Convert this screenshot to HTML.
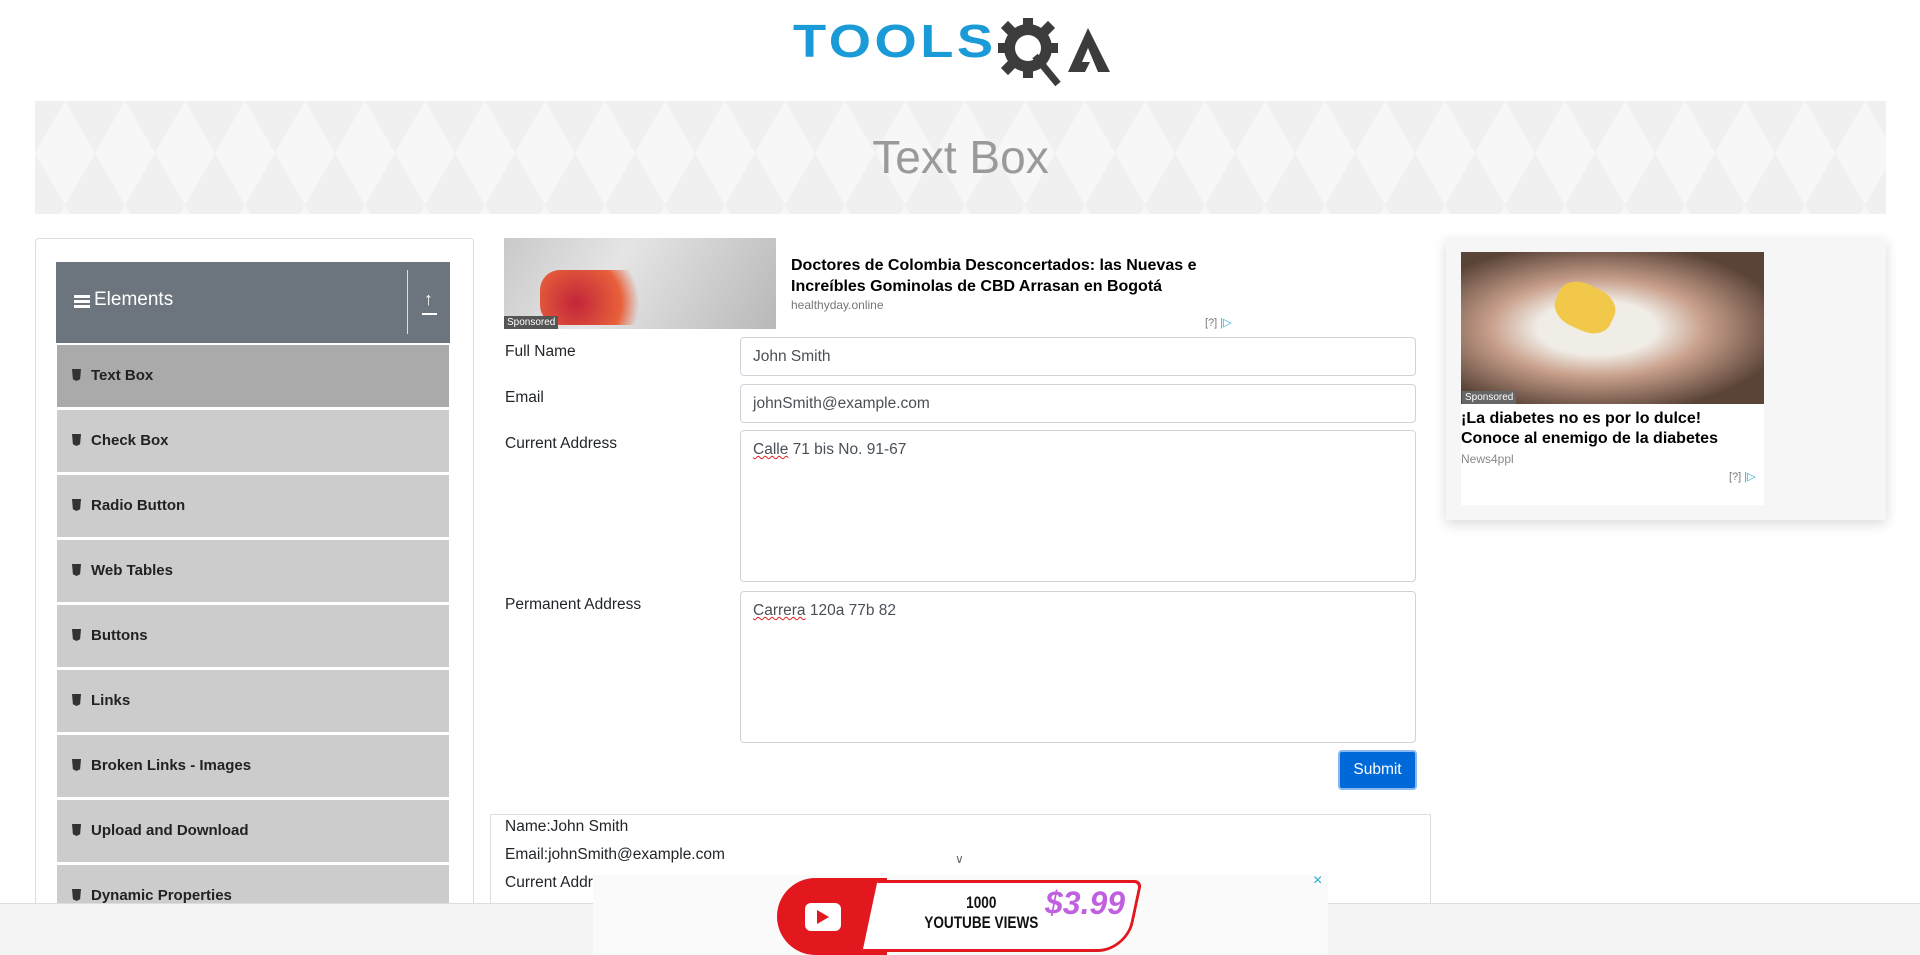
<!DOCTYPE html>
<html><head><meta charset="utf-8">
<style>
*{box-sizing:border-box;margin:0;padding:0}
html,body{width:1920px;height:955px;overflow:hidden}
body{background:#fff;font-family:"Liberation Sans",sans-serif;color:#212529;position:relative}
#wrap{position:absolute;left:0;top:0;width:1920px;height:955px;overflow:hidden}
.abs{position:absolute}
.banner{left:35px;top:101px;width:1851px;height:113px;background:#f7f7f7;background-image:linear-gradient(60deg,#f0f0f0 25%,transparent 25%,transparent 75%,#f0f0f0 75%),linear-gradient(-60deg,#f0f0f0 25%,transparent 25%,transparent 75%,#f0f0f0 75%);background-size:60px 104px}
.banner h1{font-weight:300;font-size:46px;color:#9a9a9a;text-align:center;line-height:113px}
.card{left:35px;top:238px;width:439px;height:717px;border:1px solid #ddd;border-bottom:none;border-radius:4px 4px 0 0}
.hdr{left:56px;top:262px;width:394px;height:81px;background:#6c757d;color:#fff}
.item{left:57px;width:392px;height:62px;background:#ccc;font-weight:bold;font-size:15px;color:#222;padding-left:34px;line-height:62px}
.item:before{content:"";position:absolute;left:15px;top:24px;width:9px;height:12px;background:#333;clip-path:polygon(0 0,100% 0,90% 85%,50% 100%,10% 85%)}
.lbl{left:505px;font-size:15.5px;color:#212529}
.inp{left:740px;width:676px;border:1px solid #ced4da;border-radius:4px;font-size:15.5px;color:#495057;padding:10px 12px;background:#fff}
.sq{text-decoration:underline wavy #d22;text-decoration-thickness:1px}
</style></head><body><div id="wrap">
<div class="abs" style="left:793px;top:18px;font-weight:bold;font-size:46px;color:#1a9ad6;letter-spacing:3px;line-height:46px;transform:scaleX(1.18);transform-origin:left">TOOLS</div>
<svg class="abs" style="left:990px;top:14px" width="130" height="80" viewBox="0 0 130 80">
<g fill="#3c3c3c">
<circle cx="38" cy="34" r="24"/>
<rect x="33" y="4" width="10" height="10"/><rect x="33" y="54" width="10" height="10"/>
<rect x="8" y="29" width="10" height="10"/><rect x="58" y="29" width="10" height="10"/>
<rect x="13" y="9" width="10" height="10" transform="rotate(45 18 14)"/><rect x="53" y="9" width="10" height="10" transform="rotate(45 58 14)"/>
<rect x="13" y="49" width="10" height="10" transform="rotate(45 18 54)"/>
</g>
<circle cx="38" cy="34" r="13" fill="#fff"/>
<line x1="45" y1="42" x2="68" y2="70" stroke="#3c3c3c" stroke-width="7"/>
<polygon points="78,58 98,14 120,58 108,58 98,34 92,48 100,48 95,58" fill="#3c3c3c"/>
</svg>
<div class="abs banner"><h1>Text Box</h1></div>
<div class="abs card"></div>
<div class="abs hdr">
<div class="abs" style="left:18px;top:33px;width:16px;height:3px;background:#fff;box-shadow:0 5px 0 #fff,0 10px 0 #fff"></div>
<div class="abs" style="left:38px;top:27px;font-size:19px">Elements</div>
<div class="abs" style="left:351px;top:8px;width:1px;height:64px;background:#ddd"></div>
<div class="abs" style="left:368px;top:27px;font-size:18px">↑</div>
<div class="abs" style="left:366px;top:51px;width:15px;height:2px;background:#fff"></div>
</div>
<div class="abs item" style="top:345px;background:#aaa">Text Box</div>
<div class="abs item" style="top:410px">Check Box</div>
<div class="abs item" style="top:475px">Radio Button</div>
<div class="abs item" style="top:540px">Web Tables</div>
<div class="abs item" style="top:605px">Buttons</div>
<div class="abs item" style="top:670px">Links</div>
<div class="abs item" style="top:735px">Broken Links - Images</div>
<div class="abs item" style="top:800px">Upload and Download</div>
<div class="abs item" style="top:865px;height:38px;overflow:hidden">Dynamic Properties</div>
<div class="abs" style="left:504px;top:238px;width:272px;height:91px;background:linear-gradient(120deg,#c9c9c9,#e5e5e5 40%,#b8b8b8)"></div>
<div class="abs" style="left:540px;top:270px;width:120px;height:55px;border-radius:20px;background:radial-gradient(circle at 30% 60%,#c2263a,#e8603a 50%,transparent 70%)"></div>
<div class="abs" style="left:504px;top:316px;background:#555;color:#fff;font-size:10px;padding:1px 3px">Sponsored</div>
<div class="abs" style="left:791px;top:255px;font-weight:bold;font-size:16px;line-height:21px;color:#000">Doctores de Colombia Desconcertados: las Nuevas e<br>Increíbles Gominolas de CBD Arrasan en Bogotá</div>
<div class="abs" style="left:791px;top:298px;font-size:12px;color:#777">healthyday.online</div>
<div class="abs" style="left:1205px;top:316px;font-size:11px;color:#777">[?] <span style="color:#29a9d6">|▷</span></div>
<div class="abs lbl" style="top:343px">Full Name</div>
<div class="abs inp" style="top:337px;height:39px">John Smith</div>
<div class="abs lbl" style="top:389px">Email</div>
<div class="abs inp" style="top:384px;height:39px">johnSmith@example.com</div>
<div class="abs lbl" style="top:435px">Current Address</div>
<div class="abs inp" style="top:430px;height:152px"><span class="sq">Calle</span> 71 bis No. 91-67</div>
<div class="abs lbl" style="top:596px">Permanent Address</div>
<div class="abs inp" style="top:591px;height:152px"><span class="sq">Carrera</span> 120a 77b 82</div>
<div class="abs" style="left:1338px;top:750px;width:79px;height:40px;background:#0069d9;border:2px solid #8ab8f0;border-radius:4px;color:#fff;font-size:15.5px;text-align:center;line-height:36px">Submit</div>
<div class="abs" style="left:490px;top:814px;width:941px;height:141px;border:1px solid #ddd;border-bottom:none"></div>
<div class="abs lbl" style="top:818px">Name:John Smith</div>
<div class="abs lbl" style="top:846px">Email:johnSmith@example.com</div>
<div class="abs lbl" style="top:874px">Current Address :</div>
<div class="abs" style="left:1446px;top:238px;width:440px;height:282px;background:#f6f6f6;box-shadow:0 4px 12px rgba(0,0,0,.15)"></div>
<div class="abs" style="left:1461px;top:252px;width:303px;height:253px;background:#fff"></div>
<div class="abs" style="left:1461px;top:252px;width:303px;height:152px;background:radial-gradient(ellipse at 45% 50%,#f0ede6 25%,#c9a08c 45%,#5a4438 80%)"></div>
<div class="abs" style="left:1555px;top:285px;width:60px;height:45px;background:#f2c84b;border-radius:40%;transform:rotate(25deg)"></div>
<div class="abs" style="left:1462px;top:391px;background:#666;color:#fff;font-size:10px;padding:1px 3px">Sponsored</div>
<div class="abs" style="left:1461px;top:409px;font-weight:bold;font-size:16px;line-height:20px;color:#000">¡La diabetes no es por lo dulce!<br>Conoce al enemigo de la diabetes</div>
<div class="abs" style="left:1461px;top:452px;font-size:12px;color:#888">News4ppl</div>
<div class="abs" style="left:1729px;top:470px;font-size:11px;color:#777">[?] <span style="color:#29a9d6">|▷</span></div>
<div class="abs" style="left:0;top:903px;width:1920px;height:52px;background:#f4f4f4;border-top:1px solid #ddd"></div>
<div class="abs" style="left:955px;top:852px;font-size:12px;color:#666">∨</div>
<div class="abs" style="left:593px;top:875px;width:735px;height:80px;background:#fafafa"></div>
<div class="abs" style="left:1313px;top:872px;font-size:16px;color:#29a9d6">×</div>
<div class="abs" style="left:777px;top:878px;width:110px;height:77px;background:#e3171e;border-radius:45px 0 0 45px"></div>
<div class="abs" style="left:805px;top:903px;width:36px;height:28px;background:#fff;border-radius:6px"></div>
<div class="abs" style="left:817px;top:910px;width:0;height:0;border-left:12px solid #e3171e;border-top:7px solid transparent;border-bottom:7px solid transparent"></div>
<div class="abs" style="left:870px;top:880px;width:265px;height:72px;border:3px solid #e3171e;border-left:none;border-radius:0 8px 30px 0;transform:skewX(-12deg);background:#fff"></div>
<div class="abs" style="left:910px;top:893px;font-weight:bold;font-size:17px;line-height:20px;text-align:center;color:#111;transform:scaleX(.8)">1000<br>YOUTUBE VIEWS</div>
<div class="abs" style="left:1045px;top:885px;font-weight:bold;font-size:32px;font-style:italic;color:#c060e0">$3.99</div>
</div></body></html>
